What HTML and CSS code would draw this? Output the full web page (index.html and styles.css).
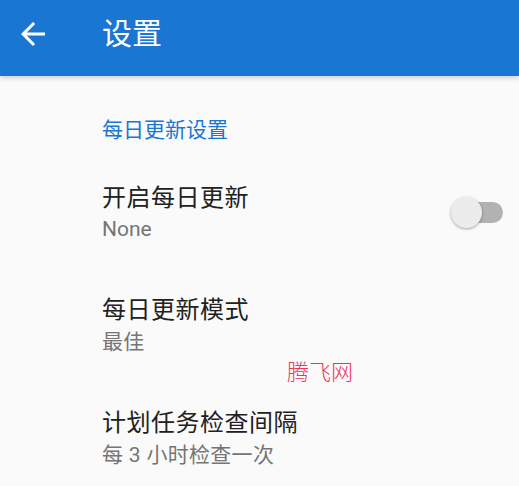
FILE: index.html
```html
<!DOCTYPE html>
<html lang="zh-CN">
<head>
<meta charset="utf-8">
<title>设置</title>
<link rel="stylesheet" href="styles.css">
</head>
<body>
<header class="toolbar">
  <button class="back" aria-label="返回">
    <svg viewBox="0 0 24 24" width="36" height="36"><path fill="#fff" d="M20 11H7.83l5.59-5.59L12 4l-8 8 8 8 1.41-1.41L7.83 13H20v-2z"/></svg>
  </button>
  <h1 class="title">设置</h1>
</header>
<main class="prefs">
  <div class="category">每日更新设置</div>
  <div class="pref">
    <div class="pref-text">
      <div class="pref-title">开启每日更新</div>
      <div class="pref-summary latin">None</div>
    </div>
    <div class="switch"><span class="thumb"></span></div>
  </div>
  <div class="pref">
    <div class="pref-text">
      <div class="pref-title">每日更新模式</div>
      <div class="pref-summary">最佳</div>
    </div>
  </div>
  <div class="pref">
    <div class="pref-text">
      <div class="pref-title">计划任务检查间隔</div>
      <div class="pref-summary">每 3 小时检查一次</div>
    </div>
  </div>
  <div class="watermark">腾飞网</div>
</main>
</body>
</html>
```
FILE: styles.css
```css
* { box-sizing: border-box; }
html, body {
  margin: 0;
  padding: 0;
  height: 100%;
  background: #fafafa;
  font-family: Roboto, "Noto Sans CJK SC", sans-serif;
  overflow: hidden;
}
.toolbar {
  height: 76px;
  background: #1976d2;
  display: flex;
  align-items: flex-start;
  padding-top: 16px;
  box-shadow: 0 2px 5px rgba(0,0,0,0.18);
  position: relative;
  z-index: 1;
}
.back {
  width: 36px;
  height: 36px;
  margin-left: 15px;
  padding: 0;
  border: 0;
  background: none;
  display: flex;
}
.title {
  margin: 0 0 0 51px;
  font-size: 30px;
  font-weight: 400;
  color: #fff;
  line-height: 36px;
}
.prefs {
  position: relative;
  padding-top: 39px;
}
.category {
  padding-left: 102px;
  font-size: 21px;
  line-height: 30px;
  color: #1976d2;
  margin-bottom: 13px;
}
.pref {
  display: flex;
  align-items: center;
  padding: 24px 16px 24px 102px;
}
.pref + .pref { padding-top: 26px; }
.pref-text { flex: 1; }
.pref-title {
  font-size: 24px;
  line-height: 32px;
  color: #212121;
  letter-spacing: 0.5px;
}
.pref-summary {
  font-size: 21px;
  line-height: 30px;
  color: #757575;
  margin-top: 1px;
  letter-spacing: 0.3px;
}
.pref-summary.latin { margin-top: 0; letter-spacing: 0; }
.switch {
  position: relative;
  width: 48px;
  height: 21px;
  border-radius: 11px;
  background: #b2b2b2;
  margin-top: -2px;
}
.thumb {
  position: absolute;
  left: -4px;
  top: -5px;
  width: 31px;
  height: 31px;
  border-radius: 50%;
  background: #ececec;
  box-shadow: 0 1px 3px rgba(0,0,0,0.35);
}
.watermark {
  position: absolute;
  left: 287px;
  top: 280px;
  font-size: 22px;
  line-height: 28px;
  color: #f0345a;
  font-family: "Noto Sans CJK SC", sans-serif;
  font-weight: 300;
}
```
